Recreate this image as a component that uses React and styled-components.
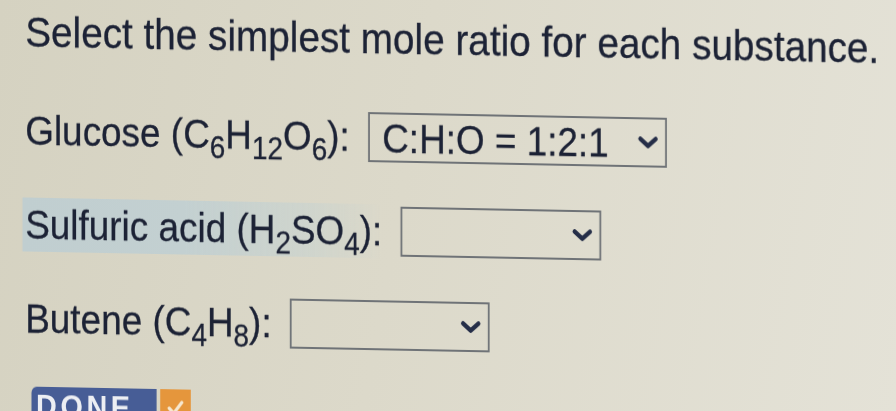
import React from "react";
import styled, { createGlobalStyle } from "styled-components";

const Global = createGlobalStyle`
  html, body {
    margin: 0;
    padding: 0;
    width: 896px;
    height: 411px;
    overflow: hidden;
    background: linear-gradient(100deg, #d5d2c1 0%, #dcd9ca 45%, #e4e2d7 100%);
  }
  #root { width: 896px; height: 411px; overflow: hidden; }
`;

const Photo = styled.div`
  width: 1000px;
  height: 470px;
  box-sizing: border-box;
  padding: 6px 0 0 28px;
  transform-origin: 0 0;
  transform: skewY(1.1deg) scaleX(0.9);
  font-family: "Liberation Sans", Arial, sans-serif;
  color: #1c2235;
  filter: blur(0.35px);
`;

const Title = styled.h1`
  margin: 0 0 49px;
  font-size: 43px;
  line-height: 50px;
  font-weight: normal;
  white-space: nowrap;
  -webkit-text-stroke: 0.3px #1c2235;
`;

const Rows = styled.div`
  display: flex;
  flex-direction: column;
  gap: 44px;
`;

const Row = styled.div`
  display: flex;
  align-items: center;
  gap: 20px;
  height: 50px;
`;

const Label = styled.div`
  font-size: 41px;
  line-height: 50px;
  white-space: nowrap;
  -webkit-text-stroke: 0.3px #1c2235;
  padding: ${(p) => (p.$highlight ? "2px 0 2px 3px" : "0")};
  margin: ${(p) => (p.$highlight ? "-2px 0 -2px -3px" : "0")};
  background: ${(p) =>
    p.$highlight
      ? "linear-gradient(90deg, #c0ced0 0%, #c3d0d1 45%, rgba(200,211,208,0.6) 80%, rgba(205,212,205,0) 100%)"
      : "none"};
`;

const Sub = styled.span`
  font-size: 31px;
  line-height: 0;
  vertical-align: -10px;
`;

const Select = styled.div`
  width: ${(p) => p.$w}px;
  height: 50px;
  box-sizing: border-box;
  border: 2px solid #6f7377;
  display: flex;
  align-items: center;
  justify-content: space-between;
  padding: 3px 7px 0 14px;
  font-size: 41px;
  line-height: 1;
  white-space: nowrap;
  -webkit-text-stroke: 0.3px #1c2235;
`;

const Chevron = styled.svg`
  flex: none;
  margin-left: auto;
  margin-top: -3px;
`;

const Done = styled.div`
  display: flex;
  margin: 43px 0 0 7px;
  height: 44px;
`;

const DoneLabel = styled.div`
  width: 139px;
  box-sizing: border-box;
  background: #475d96;
  color: #eceef3;
  font-weight: bold;
  font-size: 32px;
  letter-spacing: 4px;
  line-height: 1;
  padding: 3px 0 0 5px;
  border-radius: 6px 0 0 0;
`;

const DoneCheck = styled.div`
  width: 34px;
  margin-left: 4px;
  background: #e5963c;
  display: flex;
  justify-content: center;
  padding-top: 10px;
  box-sizing: border-box;
`;

const Caret = () => (
  <Chevron width="24" height="14" viewBox="0 0 24 14">
    <polyline
      points="3.5,3.5 12,10.5 20.5,3.5"
      fill="none"
      stroke="#252e48"
      strokeWidth="4.6"
      strokeLinecap="round"
      strokeLinejoin="round"
    />
  </Chevron>
);

export default function App() {
  return (
    <>
      <Global />
      <Photo>
        <Title>Select the simplest mole ratio for each substance.</Title>
        <Rows>
          <Row>
            <Label>
              Glucose (C<Sub>6</Sub>H<Sub>12</Sub>O<Sub>6</Sub>):
            </Label>
            <Select $w={332}>
              <span>C:H:O = 1:2:1</span>
              <Caret />
            </Select>
          </Row>
          <Row>
            <Label $highlight>
              Sulfuric acid (H<Sub>2</Sub>SO<Sub>4</Sub>):
            </Label>
            <Select $w={223}>
              <Caret />
            </Select>
          </Row>
          <Row>
            <Label>
              Butene (C<Sub>4</Sub>H<Sub>8</Sub>):
            </Label>
            <Select $w={222}>
              <Caret />
            </Select>
          </Row>
        </Rows>
        <Done>
          <DoneLabel>DONE</DoneLabel>
          <DoneCheck>
            <svg width="20" height="16" viewBox="0 0 20 16">
              <polyline
                points="3,9 8,14 17,3"
                fill="none"
                stroke="#f6e8d0"
                strokeWidth="3.5"
                strokeLinecap="round"
                strokeLinejoin="round"
              />
            </svg>
          </DoneCheck>
        </Done>
      </Photo>
    </>
  );
}
